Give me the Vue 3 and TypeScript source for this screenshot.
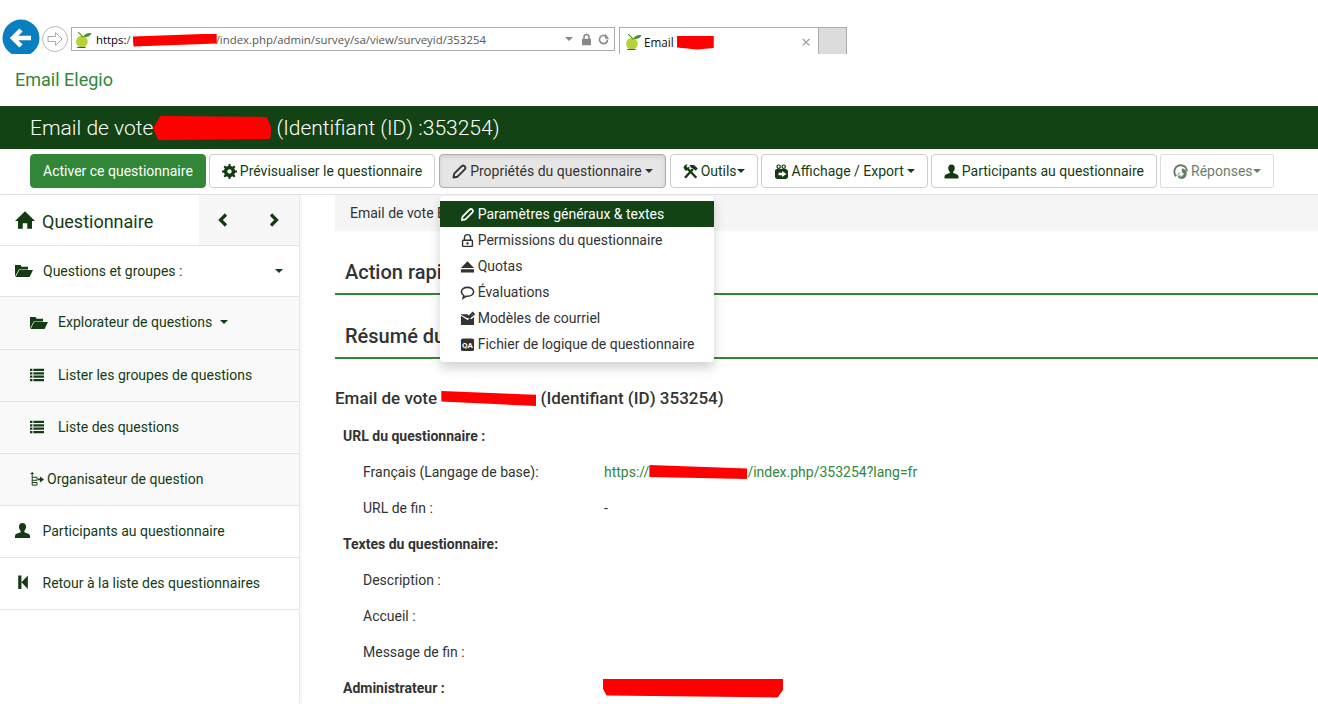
<script setup lang="ts">
function gearPath(): string {
  const teeth = 8
  const pts: string[] = []
  for (let i = 0; i < teeth; i++) {
    const a = (i / teeth) * Math.PI * 2
    const s = (Math.PI * 2) / teeth
    const corners: [number, number][] = [
      [5.6, a - s * 0.5],
      [5.6, a - s * 0.26],
      [7.5, a - s * 0.17],
      [7.5, a + s * 0.17],
      [5.6, a + s * 0.26],
    ]
    for (const [r, t] of corners) {
      pts.push(`${(8 + r * Math.cos(t)).toFixed(2)} ${(8 + r * Math.sin(t)).toFixed(2)}`)
    }
  }
  return `M${pts.join('L')}ZM8 5.8a2.2 2.2 0 1 0 .01 0Z`
}

const folder = '<path d="M0 1h5.500l1.200 1.700h6.300v2.800H3.800L0 12.500z"/><path d="M4.200 6H18l-3.400 7H0.600z"/>'
const list =
  '<path d="M0 .5h2.400v2.300H0zM3.400 .5H14v2.300H3.400zM0 3.900h2.400v2.300H0zM3.400 3.900H14v2.300H3.400zM0 7.300h2.400v2.300H0zM3.400 7.300H14v2.300H3.400zM0 10.700h2.400v2.300H0zM3.400 10.700H14v2.300H3.400z"/>'
const user =
  '<path d="M8 1c2.100 0 3.300 1.500 3.300 3.600 0 1.500-.7 3-1.600 3.800v1.200c2 .8 5.300 1.400 5.300 3.400v2H1v-2c0-2 3.300-2.600 5.300-3.400V8.400C5.400 7.600 4.700 6.100 4.700 4.600 4.700 2.500 5.900 1 8 1z"/>'
const icons: Record<string, string> = {
  home: '<path d="M8 1 16 8.800h-2.400V15H9.800v-4.500H6.200V15H2.400V8.800H0z"/>',
  gear: `<path fill-rule="evenodd" d="${gearPath()}"/>`,
  pencil:
    '<path fill="none" stroke="currentColor" stroke-width="1.900" stroke-linejoin="round" d="M2 14l.7-3.800 7.500-7.500a2.200 2.200 0 0 1 3.100 3.100L5.800 13.300z"/>',
  tools:
    '<path fill="none" stroke="currentColor" stroke-width="2.400" d="M2.500 14.300 10.500 5.500M13.800 14.300 5.500 5.500"/><path d="M7 1.500h4.500l3.800 3.500-2 2.200L10.500 5 8.500 4.300zM1 4.300A3.300 3.300 0 0 1 5.300 1.200L3.700 2.800l1.500 1.500 1.600-1.500A3.300 3.300 0 0 1 2.800 7z"/>',
  export:
    '<circle cx="5.200" cy="3.200" r="1.700" fill="none" stroke="currentColor" stroke-width="1.200"/><circle cx="10.200" cy="3.200" r="1.700" fill="none" stroke="currentColor" stroke-width="1.200"/><path d="M3.500 5.500h8.500c1.500 0 2.500 1 2.500 2.500v5c0 1.500-1 2.500-2.500 2.500H4C2.500 15.500 1.500 14.500 1.500 13V7.500c0-1.200.8-2 2-2z"/><path fill="#fff" d="M5 9.300h3.500V7.500l4.500 3-4.500 3v-1.800H5z"/>',
  user,
  reply:
    '<path fill="none" stroke="currentColor" stroke-width="1.900" d="M3.800 12.800A6 6 0 1 1 12.800 3.500c1.200 1.400 1.700 3 1.400 4.500"/><path d="M9.500 4.800a5.300 5.300 0 1 1-3.700 9.500L5 10.500c1-1.200 2.800-1.800 4-1.500z"/><path fill="#fff" d="M8 7.300l3.500 3.200L8 13.800v-2c-1 0-1.700.2-2.500.8.300-2 1.200-3 2.500-3.200z"/>',
  lock:
    '<path fill-rule="evenodd" d="M4 7V5a4 4 0 0 1 8 0v2h.5c.8 0 1.500.7 1.500 1.500v5c0 .8-.7 1.500-1.500 1.500h-9C2.700 15 2 14.300 2 13.500v-5C2 7.700 2.700 7 3.500 7zm1.500 0h5V5a2.500 2.500 0 0 0-5 0zM3.500 8.500v5h9v-5zM8 9.700a1.300 1.300 0 1 1-.01 0z"/>',
  eject: '<path d="M8 2.500 15 9.500H1zM1 11h14v3.500H1z"/>',
  comment:
    '<path fill="none" stroke="currentColor" stroke-width="1.700" d="M8 2.500c3.700 0 6.500 2 6.500 4.700S11.700 12 8 12H6.500l-3.200 2 .7-2.900C2.500 10.300 1.500 8.900 1.500 7.200 1.500 4.500 4.300 2.500 8 2.500z"/>',
  mail:
    '<path d="M1 5l7 4.500 2.500-1.500 2 .5L15 6.500V15H1zM1 3.500h7l1.800 2L8 7.800 1 4z"/><path fill="none" stroke="currentColor" stroke-width="1.700" d="M8.800 6.500 13.500 1.800l1.500 1.500-5 4.200z"/>',
  qa: '<rect x="1" y="1.500" width="14" height="13.500" rx="2"/><text x="8" y="11.500" text-anchor="middle" font-family="Roboto, sans-serif" font-size="8.500" font-weight="700" fill="#fff">QA</text>',
  org: '<path fill="none" stroke="currentColor" stroke-width="1.100" d="M2.500 0v15M.6 1.800h3.800M2.500 6h5.500v3.500H2.500M2.500 15h5.500v-3H2.500"/><path d="M9 7.500h2.500V5L16 8.500 11.500 12V9.500H9z"/>',
  left: '<path fill="none" stroke="currentColor" stroke-width="3.200" d="M11 2.500 5.500 8l5.500 5.500"/>',
  right: '<path fill="none" stroke="currentColor" stroke-width="3.200" d="M5 2.500 10.500 8 5 13.500"/>',
  back: '<path d="M4 1.500h3v12.500H4zM7 7.800l6-6.300v12.500z"/>',
  folder,
  list,
}

const menu = [
  { icon: 'pencil', label: 'Paramètres généraux & textes', active: true },
  { icon: 'lock', label: 'Permissions du questionnaire', active: false },
  { icon: 'eject', label: 'Quotas', active: false },
  { icon: 'comment', label: 'Évaluations', active: false },
  { icon: 'mail', label: 'Modèles de courriel', active: false },
  { icon: 'qa', label: 'Fichier de logique de questionnaire', active: false },
]

const details = [
  { label: 'URL du questionnaire :', head: true, kind: '' },
  { label: 'Français (Langage de base):', head: false, kind: 'url' },
  { label: 'URL de fin :', head: false, kind: 'dash' },
  { label: 'Textes du questionnaire:', head: true, kind: '' },
  { label: 'Description :', head: false, kind: '' },
  { label: 'Accueil :', head: false, kind: '' },
  { label: 'Message de fin :', head: false, kind: '' },
  { label: 'Administrateur :', head: true, kind: 'admin' },
]
</script>

<template>
  <div class="page">
    <div class="browser">
      <svg class="nav-back" viewBox="0 0 38 38">
        <circle cx="19" cy="19" r="18.500" fill="#0a7fc0" />
        <path d="M29 19H12M19 11 11 19l8 8" fill="none" stroke="#fff" stroke-width="4.500" />
      </svg>
      <svg class="nav-fwd" viewBox="0 0 26 26">
        <circle cx="13" cy="13" r="12.500" fill="#fff" stroke="#bbb" />
        <path d="M6 10.500h7.500V6.500L20 13l-6.500 6.500v-4H6z" fill="none" stroke="#aaa" />
      </svg>
      <div class="address">
        <svg class="lime" viewBox="0 0 16 16">
          <circle cx="6.500" cy="10" r="5.500" fill="#b5d334" />
          <path d="M8 5.500C9 2.500 12 1.500 15.500 2 14 5 11.500 6 8 5.500z" fill="#4a8f2b" />
          <path d="M8 6 3 1" stroke="#4a8f2b" fill="none" />
          <path d="M2 15.500h8" stroke="#555" />
        </svg>
        <span class="url"><span class="scheme">https:</span>/<span class="red r-addr"></span>/index.php/admin/survey/sa/view/surveyid/353254</span>
        <span class="addr-tools">
          <i class="mini-caret"></i>
          <svg class="addr-ic" viewBox="0 0 16 16">
            <path d="M4 7V5a4 4 0 0 1 8 0v2h1.500v8h-11V7zm1.800 0h4.400V5a2.200 2.200 0 0 0-4.400 0z" />
          </svg>
          <svg class="addr-ic" viewBox="0 0 16 16">
            <path d="M13 8a5 5 0 1 1-1.500-3.500" fill="none" stroke="#888" stroke-width="2" />
            <path d="M10 1v6h5z" fill="#888" />
          </svg>
        </span>
      </div>
      <div class="tab">
        <svg class="lime" viewBox="0 0 16 16">
          <circle cx="6.500" cy="10" r="5.500" fill="#b5d334" />
          <path d="M8 5.500C9 2.500 12 1.500 15.500 2 14 5 11.500 6 8 5.500z" fill="#4a8f2b" />
          <path d="M8 6 3 1" stroke="#4a8f2b" fill="none" />
          <path d="M2 15.500h8" stroke="#555" />
        </svg>
        <span class="tab-title">Email <span class="red r-tab"></span></span>
        <span class="tab-close">×</span>
      </div>
      <div class="new-tab"></div>
    </div>

    <div class="brand">Email Elegio</div>

    <div class="title-band">Email de vote<span class="red r-head"></span> (Identifiant (ID) :353254)</div>

    <div class="toolbar">
      <button class="btn primary">Activer ce questionnaire</button>
      <button class="btn"><svg class="ic" viewBox="0.5 0.5 15 15" v-html="icons.gear"></svg>Prévisualiser le questionnaire</button>
      <div class="dropdown">
        <button class="btn open"><svg class="ic" viewBox="0.5 0.5 15 15" v-html="icons.pencil"></svg>Propriétés du questionnaire<i class="caret"></i></button>
        <ul class="menu">
          <li v-for="m in menu" :key="m.label" :class="{ active: m.active }">
            <svg class="ic" viewBox="0 0 16 16" v-html="icons[m.icon]"></svg>{{ m.label }}
          </li>
        </ul>
      </div>
      <button class="btn"><svg class="ic" viewBox="0.5 0.5 15 15" v-html="icons.tools"></svg>Outils<i class="caret tight"></i></button>
      <button class="btn"><svg class="ic" viewBox="0.5 0.5 15 15" v-html="icons.export"></svg>Affichage / Export<i class="caret"></i></button>
      <button class="btn"><svg class="ic" viewBox="0.5 0.5 15 15" v-html="icons.user"></svg>Participants au questionnaire</button>
      <button class="btn disabled"><svg class="ic" viewBox="0.5 0.5 15 15" v-html="icons.reply"></svg>Réponses<i class="caret tight"></i></button>
    </div>

    <div class="body">
      <aside class="sidebar">
        <div class="side-head">
          <div class="side-title"><svg class="home" viewBox="0 0 16 16" v-html="icons.home"></svg>Questionnaire</div>
          <div class="side-nav">
            <svg class="chev" viewBox="0 0 16 16" v-html="icons.left"></svg>
            <svg class="chev" viewBox="0 0 16 16" v-html="icons.right"></svg>
          </div>
        </div>
        <div class="row top first-row">
          <svg class="fold" viewBox="0 0 18 13" v-html="icons.folder"></svg>
          <span class="grow">Questions et groupes :</span>
          <i class="caret side-caret"></i>
        </div>
        <div class="row sub tall">
          <svg class="fold" viewBox="0 0 18 13" v-html="icons.folder"></svg>
          <span>Explorateur de questions</span>
          <i class="caret sub-caret"></i>
        </div>
        <div class="row sub">
          <svg class="lst" viewBox="0 0 14 13.500" v-html="icons.list"></svg>
          <span>Lister les groupes de questions</span>
        </div>
        <div class="row sub">
          <svg class="lst" viewBox="0 0 14 13.500" v-html="icons.list"></svg>
          <span>Liste des questions</span>
        </div>
        <div class="row sub">
          <svg class="org-ic" viewBox="0 0 16 16" v-html="icons.org"></svg>
          <span>Organisateur de question</span>
        </div>
        <div class="row top">
          <svg class="usr" viewBox="1 1 14 14" v-html="icons.user"></svg>
          <span>Participants au questionnaire</span>
        </div>
        <div class="row top">
          <svg class="usr" viewBox="1 1 14 14" v-html="icons.back"></svg>
          <span>Retour à la liste des questionnaires</span>
        </div>
      </aside>

      <main class="main">
        <div class="crumb">Email de vote Email Elegio</div>
        <h3 class="section first">Action rapide</h3>
        <h3 class="section">Résumé du questionnaire</h3>
        <h4 class="survey">Email de vote <span class="red r-title"></span> (Identifiant (ID) 353254)</h4>
        <div class="details">
          <div v-for="d in details" :key="d.label" class="detail">
            <div class="d-label" :class="d.head ? 'head' : 'indent'">{{ d.label }}</div>
            <div class="d-value">
              <span v-if="d.kind === 'url'" class="link">https://<span class="red r-url"></span>/index.php/353254?lang=fr</span>
              <span v-else-if="d.kind === 'dash'">-</span>
              <span v-else-if="d.kind === 'admin'" class="red r-admin"></span>
            </div>
          </div>
        </div>
      </main>
    </div>
  </div>
</template>

<style>
html, body { margin: 0; overflow: hidden; background: #fff; }
</style>

<style scoped>
.page {
  width: 1318px;
  height: 704px;
  overflow: hidden;
  font-family: Roboto, "Liberation Sans", sans-serif;
  font-size: 14px;
  color: #333;
  position: relative;
}
.red { display: inline-block; background: #f00; }

.browser {
  height: 54px;
  display: flex;
  align-items: flex-start;
  overflow: hidden;
  padding-left: 2px;
  box-sizing: border-box;
  padding-top: 27px;
}
.nav-back { width: 38px; height: 38px; margin: -8px 0 0 0; flex: none; }
.nav-fwd { width: 26px; height: 26px; margin: -1px 0 0 2px; flex: none; }
.address {
  margin-left: 3px;
  width: 544px;
  height: 24px;
  box-sizing: border-box;
  border: 1px solid #ababab;
  display: flex;
  align-items: center;
  padding: 0 4px 0 3px;
  font-family: "Open Sans", sans-serif;
  font-size: 11.400px;
  color: #666;
}
.lime { width: 17px; height: 17px; flex: none; }
.url { margin-left: 4px; color: #555; white-space: nowrap; }
.scheme { color: #000; }
.r-addr { width: 84px; height: 13px; margin-left: 2px; margin-right: -1px; vertical-align: -3px; clip-path: polygon(0 23%, 100% 0, 100% 77%, 1% 100%); }
.addr-tools { margin-left: auto; display: flex; align-items: center; gap: 4px; color: #888; }
.mini-caret { width: 0; height: 0; border: 4px solid transparent; border-top-color: #888; border-bottom: 0; margin-right: 3px; }
.addr-ic { width: 13px; height: 13px; fill: #888; }
.tab {
  margin-left: 4px;
  width: 200px;
  height: 27px;
  box-sizing: border-box;
  border: 1px solid #ababab;
  border-bottom: 0;
  display: flex;
  align-items: center;
  padding: 1px 7px 0 5px;
  font-family: "Open Sans", sans-serif;
  font-size: 11.700px;
  color: #111;
}
.tab-title { margin-left: 2px; white-space: nowrap; flex: 1; }
.r-tab { width: 37px; height: 14px; vertical-align: -3px; margin-left: 0; clip-path: polygon(0 0, 100% 0, 100% 90%, 55% 100%, 0 85%); }
.tab-close { color: #999; font-size: 17px; line-height: 1; }
.new-tab {
  width: 28px;
  height: 27px;
  box-sizing: border-box;
  background: #dcdcdc;
  border-top: 1px solid #ababab;
  border-right: 1px solid #ababab;
}

.brand {
  height: 52px;
  line-height: 52px;
  padding-left: 15px;
  font-size: 18px;
  color: #328637;
}

.title-band {
  height: 43px;
  line-height: 45px;
  background: #134214;
  color: #fff;
  padding-left: 30px;
  font-size: 21px;
  font-weight: 300;
  white-space: nowrap;
}
.r-head { width: 118px; height: 24px; vertical-align: -5px; clip-path: polygon(6% 0, 96% 4%, 100% 50%, 99% 96%, 4% 100%, 0 50%); }

.toolbar {
  height: 46px;
  box-sizing: border-box;
  padding: 5px 0 0 30px;
  display: flex;
  align-items: flex-start;
  gap: 3px;
  border-bottom: 1px solid #e4e4e4;
}
.btn {
  height: 34px;
  box-sizing: border-box;
  display: inline-flex;
  align-items: center;
  padding: 0 12px;
  border: 1px solid #ccc;
  border-radius: 4px;
  background: #fff;
  color: #143c14;
  font: 14px Roboto, sans-serif;
  white-space: nowrap;
}
.btn.primary { background: #328637; border-color: #328637; color: #fff; }
.btn.open { background: #e6e6e6; border-color: #adadad; box-shadow: inset 0 2px 4px rgba(0, 0, 0, 0.1); color: #333; }
.btn.disabled { opacity: 0.65; border-radius: 2px; }
.dropdown { position: relative; margin: 0 1px; }
.ic { width: 15px; height: 15px; margin-right: 3px; fill: currentColor; flex: none; overflow: visible; }
.menu .ic { margin-right: 2.500px; }
.caret {
  display: inline-block;
  width: 0;
  height: 0;
  border: 4px solid transparent;
  border-top-color: currentColor;
  border-bottom: 0;
  margin-left: 3px;
}
.caret.tight { margin-left: 0; }
.menu {
  position: absolute;
  left: 1px;
  top: 42px;
  z-index: 5;
  width: 274px;
  box-sizing: border-box;
  list-style: none;
  margin: 0;
  padding: 5px 0;
  background: #fff;
  border-radius: 4px;
  box-shadow: 0 6px 12px rgba(0, 0, 0, 0.18);
}
.menu li {
  height: 26px;
  display: flex;
  align-items: center;
  padding-left: 20px;
  color: #333;
  white-space: nowrap;
}
.menu li.active { background: #134214; color: #fff; }

.body { display: flex; height: 510px; }
.sidebar {
  width: 300px;
  flex: none;
  box-sizing: border-box;
  border-right: 1px solid #e7e7e7;
  box-shadow: 2px 0 3px rgba(0, 0, 0, 0.04);
  color: #143c14;
}
.side-head { height: 51px; display: flex; box-sizing: border-box; border-bottom: 1px solid #e4e4e4; }
.side-title {
  flex: 1;
  display: flex;
  align-items: center;
  padding: 2px 0 0 15px;
  font-size: 18px;
}
.home { width: 20px; height: 20px; margin: -3px 7px 0 0; fill: currentColor; }
.side-nav { width: 100px; background: #f7f7f7; display: flex; align-items: center; box-sizing: border-box; padding: 0 0 1px 16px; gap: 35px; }
.chev { width: 16px; height: 16px; }
.row {
  height: 52px;
  box-sizing: border-box;
  display: flex;
  align-items: center;
  border-bottom: 1px solid #e4e4e4;
  padding: 0 0 2px 15px;
  white-space: nowrap;
}
.row.first-row { height: 51px; padding-bottom: 1px; }
.row.sub { background: #f9f9f9; padding-left: 30px; }
.row.tall { height: 53px; }
.grow { flex: 1; }
.fold { width: 18px; height: 13px; margin-right: 10px; fill: currentColor; flex: none; }
.lst { width: 14px; height: 14px; margin-right: 14px; fill: currentColor; flex: none; }
.org-ic { width: 14px; height: 16px; margin-right: 3px; fill: currentColor; flex: none; }
.usr { width: 15px; height: 15px; margin-right: 12.500px; fill: currentColor; flex: none; overflow: visible; }
.side-caret { margin-right: 16px; color: #143c14; }
.sub-caret { margin-left: 8px; }

.main { flex: 1; padding-left: 35px; min-width: 0; }
.crumb {
  height: 36px;
  line-height: 36px;
  padding-left: 15px;
  background: #f5f5f5;
}
.section {
  margin: 20px 0 0;
  height: 44px;
  line-height: 42px;
  box-sizing: border-box;
  padding-left: 10px;
  font-size: 20px;
  font-weight: 500;
  color: #333;
  border-bottom: 2px solid #328637;
  white-space: nowrap;
}
.survey {
  margin: 21px 0 2px;
  height: 36px;
  line-height: 36px;
  font-size: 17px;
  font-weight: 500;
  white-space: nowrap;
}
.r-title { width: 95px; height: 15px; vertical-align: -2px; clip-path: polygon(0 0, 100% 25%, 100% 100%, 0 70%); }
.detail { display: flex; height: 36px; align-items: center; }
.d-label { width: 269px; flex: none; box-sizing: border-box; white-space: nowrap; }
.d-label.head { padding-left: 8px; font-weight: 700; }
.d-label.indent { padding-left: 28px; }
.d-value { white-space: nowrap; }
.link { color: #328637; }
.r-url { width: 98px; height: 14px; vertical-align: -2px; clip-path: polygon(0 0, 100% 25%, 100% 100%, 0 85%); }
.r-admin { width: 180px; height: 19px; vertical-align: -4px; margin-left: -1px; clip-path: polygon(0 0, 100% 0, 100% 60%, 97% 100%, 2% 90%, 0 55%); }
</style>
